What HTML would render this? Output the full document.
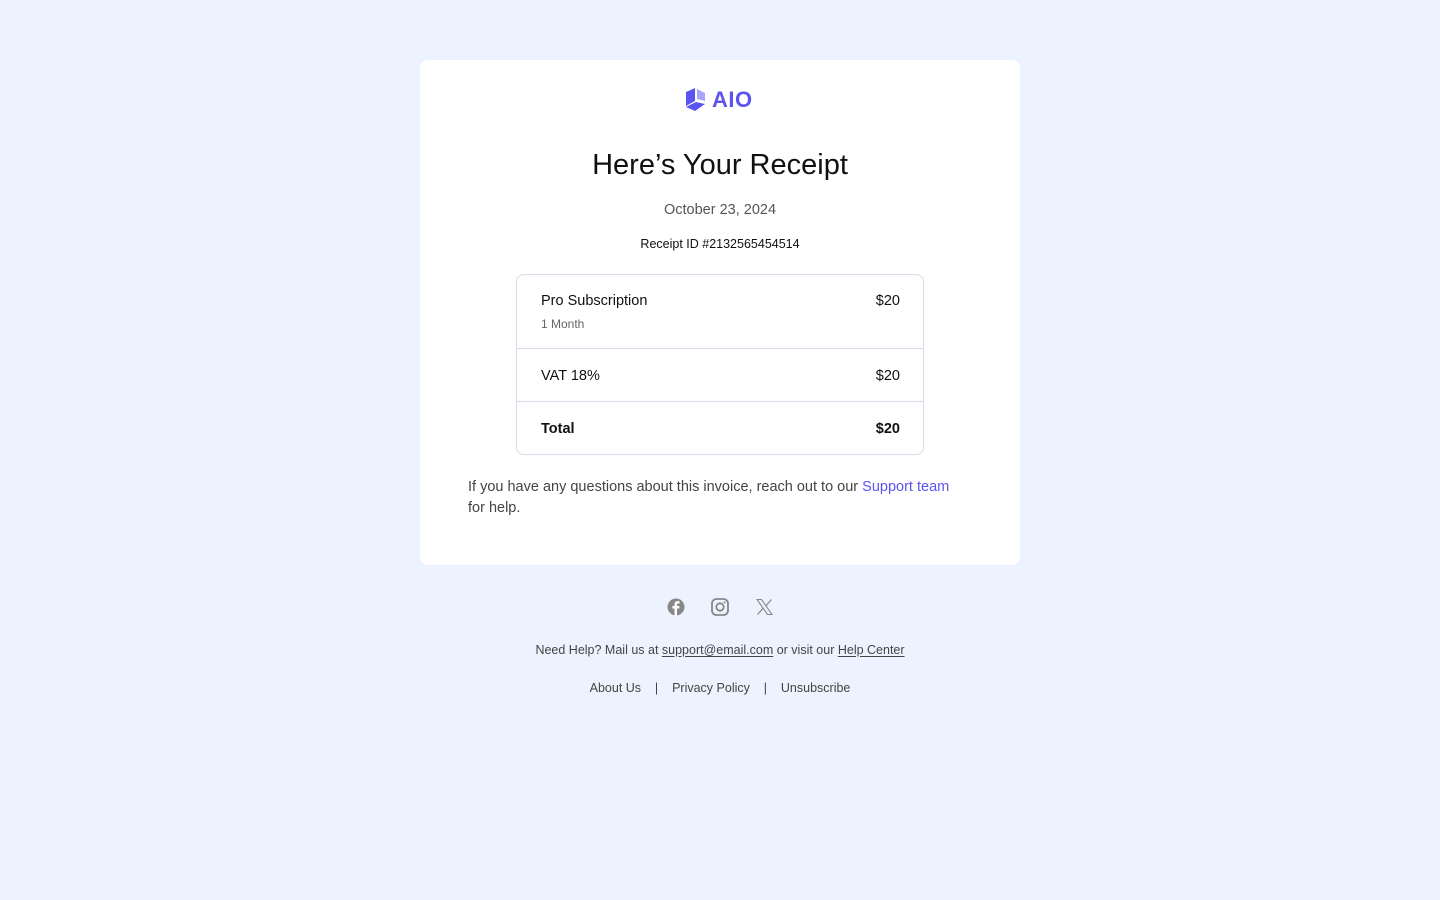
<!DOCTYPE html>
<html><head><meta charset="utf-8"><style>
*{margin:0;padding:0;box-sizing:border-box}
body{width:1440px;height:900px;background:#edf3fe;font-family:"Liberation Sans",sans-serif;color:#111;position:relative}
.card{position:absolute;left:420px;top:60px;width:600px;height:505px;background:#fff;border-radius:8px}
.abs{position:absolute;white-space:nowrap}
.c{left:0;width:100%;text-align:center}
.tbl{position:absolute;left:96px;top:214px;width:408px;height:181px;border:1px solid #d5dde8;border-radius:8px}
.row{position:absolute;left:0;width:100%;border-top:1px solid #d5dde8}
.u{text-decoration:underline;text-underline-offset:2px}
</style></head><body>
<div class="card">
  <div class="abs" style="left:264px;top:27px;display:flex;align-items:center">
    <svg width="24" height="26" viewBox="0 0 24 26"><path d="M2 5 L11 1 L11 14 L2 19 Z" fill="#5b55f0"/><path d="M13 2 L21 6 L21 14 L13 12 Z" fill="#a9a6f7"/><path d="M2 20 L12 15 L21 17 L11 24 Z" fill="#5b55f0"/></svg>
    <span style="margin-left:4px;font-size:22px;font-weight:bold;color:#5b55f0;letter-spacing:0.5px">AIO</span>
  </div>
  <div class="abs c" style="top:89px;font-size:29px;color:#111">Here’s Your Receipt</div>
  <div class="abs c" style="top:142px;font-size:14.5px;color:#555">October 23, 2024</div>
  <div class="abs c" style="top:177px;font-size:12.5px;color:#111">Receipt ID #2132565454514</div>
  <div class="tbl">
    <div class="abs" style="left:24px;top:18px;font-size:14.5px">Pro Subscription</div>
    <div class="abs" style="right:23px;top:18px;font-size:14.5px">$20</div>
    <div class="abs" style="left:24px;top:42px;font-size:12px;color:#666">1 Month</div>
    <div class="row" style="top:73px"></div>
    <div class="abs" style="left:24px;top:93px;font-size:14.5px">VAT 18%</div>
    <div class="abs" style="right:23px;top:93px;font-size:14.5px">$20</div>
    <div class="row" style="top:126px"></div>
    <div class="abs" style="left:24px;top:146px;font-size:14.5px;font-weight:bold">Total</div>
    <div class="abs" style="right:23px;top:146px;font-size:14.5px;font-weight:bold">$20</div>
  </div>
  <div class="abs" style="left:48px;top:417px;width:500px;white-space:normal;font-size:14.5px;line-height:21px;color:#444">If you have any questions about this invoice, reach out to our <span style="color:#5b55f0">Support team</span> for help.</div>
</div>
<svg class="abs" style="left:667px;top:598px" width="18" height="18" viewBox="0 0 18 18"><circle cx="9" cy="9" r="8.5" fill="#888"/><path d="M10 18 V10.5 H12.2 L12.5 8 H10 V6.6 C10 5.9 10.3 5.5 11.1 5.5 H12.6 V3.3 C12.2 3.2 11.4 3.1 10.6 3.1 C8.7 3.1 7.5 4.2 7.5 6.3 V8 H5.4 V10.5 H7.5 V18 Z" fill="#fff"/></svg>
<svg class="abs" style="left:711px;top:598px" width="18" height="18" viewBox="0 0 18 18"><rect x="1" y="1" width="16" height="16" rx="4.5" fill="none" stroke="#888" stroke-width="1.8"/><circle cx="9" cy="9" r="3.7" fill="none" stroke="#888" stroke-width="1.8"/><circle cx="13.6" cy="4.4" r="1" fill="#888"/></svg>
<svg class="abs" style="left:756px;top:599px" width="17" height="16" viewBox="0 0 17 16"><path d="M1 0.5 H5.5 L16 15.5 H11.5 Z" fill="none" stroke="#888" stroke-width="1.1"/><path d="M15.5 0.5 L9.8 6.8 M1.5 15.5 L7.2 9.2" stroke="#888" stroke-width="1.2"/></svg>
<div class="abs c" style="top:643px;font-size:12.5px;color:#444">Need Help? Mail us at <span class="u">support@email.com</span> or visit our <span class="u">Help Center</span></div>
<div class="abs c" style="top:681px;font-size:12.5px;color:#444">About Us &nbsp;&nbsp;&nbsp;| &nbsp;&nbsp;&nbsp;Privacy Policy &nbsp;&nbsp;&nbsp;| &nbsp;&nbsp;&nbsp;Unsubscribe</div>
</body></html>
